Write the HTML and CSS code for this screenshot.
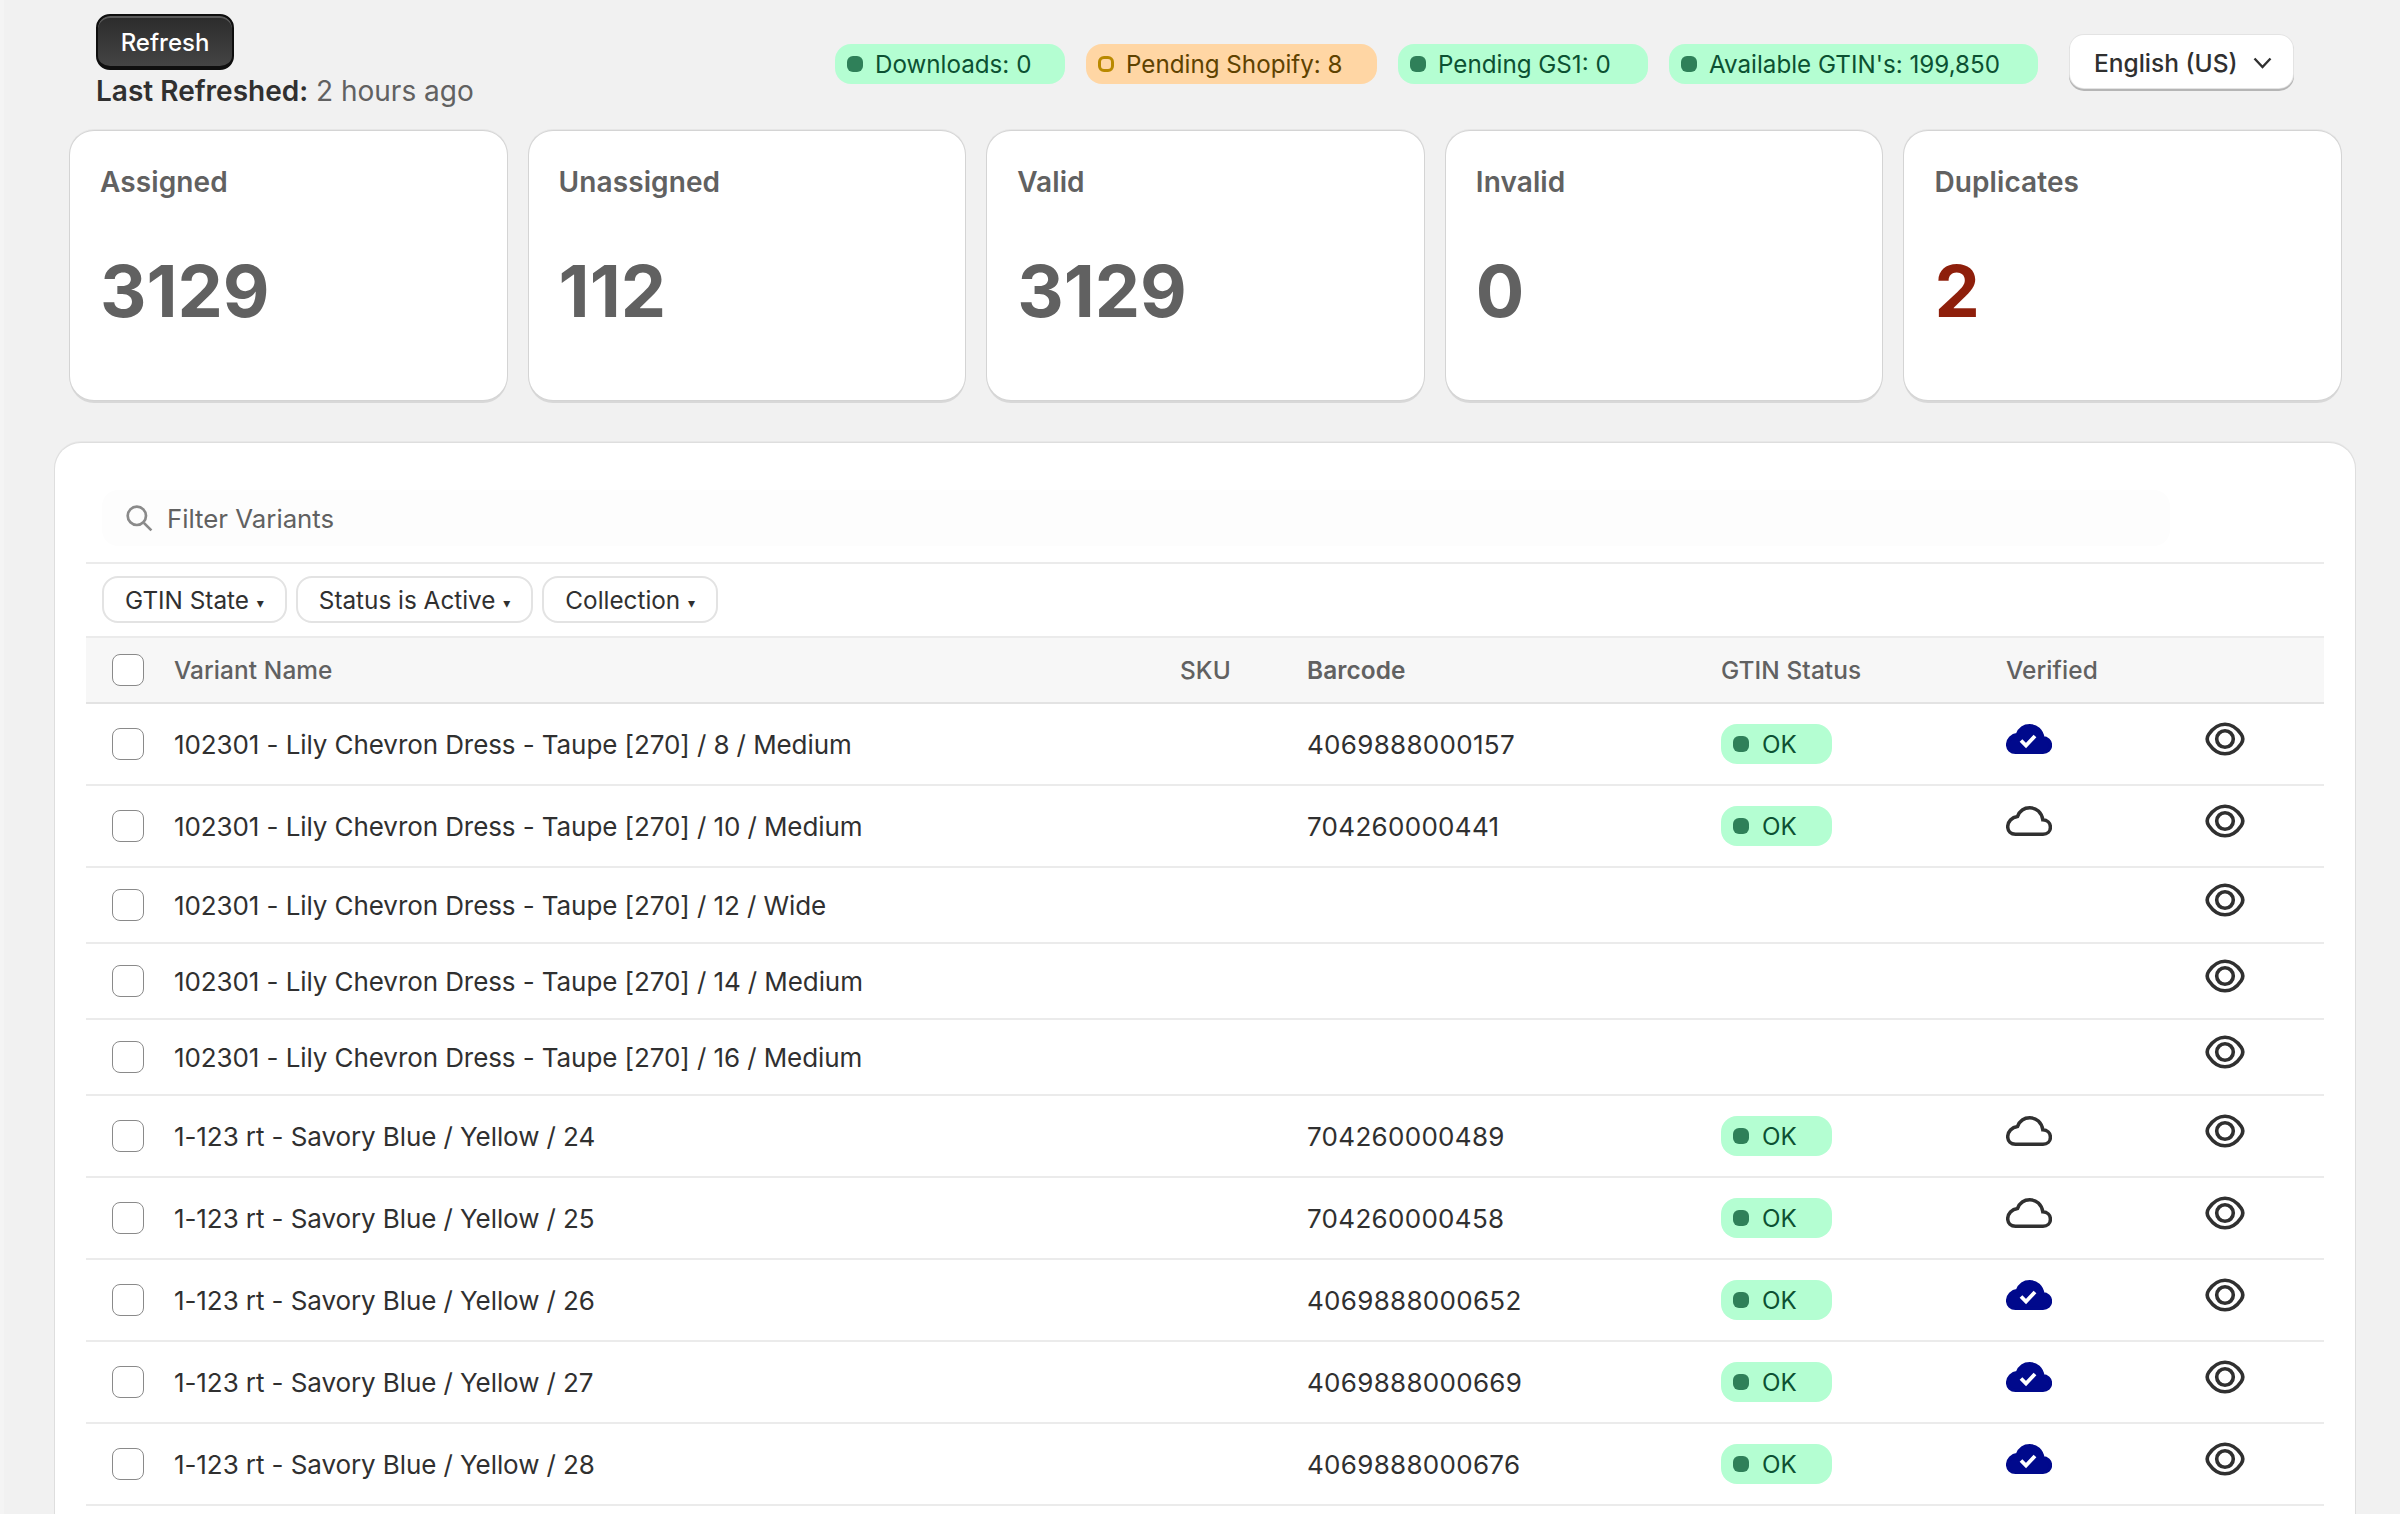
FILE: index.html
```html
<!DOCTYPE html>
<html lang="en">
<head>
<meta charset="utf-8">
<title>GTIN Variants</title>
<link rel="stylesheet" href="styles.css">
</head>
<body>
<svg class="defs" width="0" height="0" aria-hidden="true">
  <defs>
    <path id="cloud-shape" d="M9.500 28.200H37c4.300 0 7.400-3 7.400-7 0-4.200-3.200-7.200-7.600-7.400C35.600 6.500 30.500 1.800 23.800 1.800c-5.600 0-10.200 3.400-12.300 8.700C5.800 11.200 1.700 15.600 1.700 20.800c0 4.300 3.300 7.400 7.800 7.400z"/>
    <g id="eye-shape">
      <path d="M20 2.200c-6.200 0-11.800 3.700-16.200 10-1.900 2.800-1.900 6.700 0 9.500 4.400 6.400 10 10.100 16.200 10.100s11.800-3.700 16.200-10.100c1.900-2.800 1.900-6.700 0-9.500C31.800 5.900 26.200 2.200 20 2.200z"/>
      <circle cx="20" cy="17" r="8.300"/>
    </g>
  </defs>
</svg>
<main class="page">
  <header class="top">
    <div class="refresh-block">
      <button class="refresh">Refresh</button>
      <p class="last"><strong>Last Refreshed:</strong> 2 hours ago</p>
    </div>
    <div class="status-group">
      <span class="badge"><i class="dot"></i>Downloads: 0</span>
      <span class="badge badge-d"><i class="dot dot-ring"></i>Pending Shopify: 8</span>
      <span class="badge badge-g"><i class="dot"></i>Pending GS1: 0</span>
      <span class="badge badge-a"><i class="dot"></i>Available GTIN's: 199,850</span>
      <button class="lang">English (US)
        <svg class="chev" viewBox="0 0 19 12"><path d="M1.500 1.500 9.500 10l8-8.500"/></svg>
      </button>
    </div>
  </header>

  <section class="cards">
    <article class="card"><h2>Assigned</h2><p class="num">3129</p></article>
    <article class="card"><h2>Unassigned</h2><p class="num">112</p></article>
    <article class="card"><h2>Valid</h2><p class="num">3129</p></article>
    <article class="card"><h2>Invalid</h2><p class="num">0</p></article>
    <article class="card"><h2>Duplicates</h2><p class="num num-red">2</p></article>
  </section>

  <section class="panel">
    <div class="search-row">
      <div class="search">
        <svg class="search-icon" viewBox="0 0 26 26"><circle cx="11" cy="11" r="8.500"/><path d="m17.500 17.500 7 7"/></svg>
        <span>Filter Variants</span>
      </div>
    </div>
    <div class="filters">
      <button class="pill">GTIN State <span class="caret">▾</span></button>
      <button class="pill">Status is Active <span class="caret">▾</span></button>
      <button class="pill">Collection <span class="caret">▾</span></button>
    </div>
    <table class="grid">
      <colgroup>
        <col class="c-check"><col class="c-name"><col class="c-sku"><col class="c-bar"><col class="c-gtin"><col class="c-ver"><col class="c-eye">
      </colgroup>
      <thead>
        <tr>
          <th><span class="box"></span></th>
          <th class="th-light">Variant Name</th>
          <th class="th-light">SKU</th>
          <th>Barcode</th>
          <th class="th-light">GTIN Status</th>
          <th class="th-light">Verified</th>
          <th></th>
        </tr>
      </thead>
      <tbody>
        <tr>
          <td><span class="box"></span></td><td>102301 - Lily Chevron Dress - Taupe [270] / 8 / Medium</td><td></td><td class="code">4069888000157</td>
          <td><span class="ok"><i class="dot"></i>OK</span></td>
          <td><svg class="cloud cloud-on" viewBox="0 0 46 30"><use href="#cloud-shape"/><path class="tick" d="m15 16.500 5 5 9-9.500"/></svg></td>
          <td><svg class="eye" viewBox="0 0 40 34"><use href="#eye-shape"/></svg></td>
        </tr>
        <tr>
          <td><span class="box"></span></td><td>102301 - Lily Chevron Dress - Taupe [270] / 10 / Medium</td><td></td><td class="code">704260000441</td>
          <td><span class="ok"><i class="dot"></i>OK</span></td>
          <td><svg class="cloud" viewBox="0 0 46 30"><use href="#cloud-shape"/></svg></td>
          <td><svg class="eye" viewBox="0 0 40 34"><use href="#eye-shape"/></svg></td>
        </tr>
        <tr class="short">
          <td><span class="box"></span></td><td>102301 - Lily Chevron Dress - Taupe [270] / 12 / Wide</td><td></td><td></td><td></td><td></td>
          <td><svg class="eye" viewBox="0 0 40 34"><use href="#eye-shape"/></svg></td>
        </tr>
        <tr class="short">
          <td><span class="box"></span></td><td>102301 - Lily Chevron Dress - Taupe [270] / 14 / Medium</td><td></td><td></td><td></td><td></td>
          <td><svg class="eye" viewBox="0 0 40 34"><use href="#eye-shape"/></svg></td>
        </tr>
        <tr class="short">
          <td><span class="box"></span></td><td>102301 - Lily Chevron Dress - Taupe [270] / 16 / Medium</td><td></td><td></td><td></td><td></td>
          <td><svg class="eye" viewBox="0 0 40 34"><use href="#eye-shape"/></svg></td>
        </tr>
        <tr>
          <td><span class="box"></span></td><td>1-123 rt - Savory Blue / Yellow / 24</td><td></td><td class="code">704260000489</td>
          <td><span class="ok"><i class="dot"></i>OK</span></td>
          <td><svg class="cloud" viewBox="0 0 46 30"><use href="#cloud-shape"/></svg></td>
          <td><svg class="eye" viewBox="0 0 40 34"><use href="#eye-shape"/></svg></td>
        </tr>
        <tr>
          <td><span class="box"></span></td><td>1-123 rt - Savory Blue / Yellow / 25</td><td></td><td class="code">704260000458</td>
          <td><span class="ok"><i class="dot"></i>OK</span></td>
          <td><svg class="cloud" viewBox="0 0 46 30"><use href="#cloud-shape"/></svg></td>
          <td><svg class="eye" viewBox="0 0 40 34"><use href="#eye-shape"/></svg></td>
        </tr>
        <tr>
          <td><span class="box"></span></td><td>1-123 rt - Savory Blue / Yellow / 26</td><td></td><td class="code">4069888000652</td>
          <td><span class="ok"><i class="dot"></i>OK</span></td>
          <td><svg class="cloud cloud-on" viewBox="0 0 46 30"><use href="#cloud-shape"/><path class="tick" d="m15 16.500 5 5 9-9.500"/></svg></td>
          <td><svg class="eye" viewBox="0 0 40 34"><use href="#eye-shape"/></svg></td>
        </tr>
        <tr>
          <td><span class="box"></span></td><td>1-123 rt - Savory Blue / Yellow / 27</td><td></td><td class="code">4069888000669</td>
          <td><span class="ok"><i class="dot"></i>OK</span></td>
          <td><svg class="cloud cloud-on" viewBox="0 0 46 30"><use href="#cloud-shape"/><path class="tick" d="m15 16.500 5 5 9-9.500"/></svg></td>
          <td><svg class="eye" viewBox="0 0 40 34"><use href="#eye-shape"/></svg></td>
        </tr>
        <tr>
          <td><span class="box"></span></td><td>1-123 rt - Savory Blue / Yellow / 28</td><td></td><td class="code">4069888000676</td>
          <td><span class="ok"><i class="dot"></i>OK</span></td>
          <td><svg class="cloud cloud-on" viewBox="0 0 46 30"><use href="#cloud-shape"/><path class="tick" d="m15 16.500 5 5 9-9.500"/></svg></td>
          <td><svg class="eye" viewBox="0 0 40 34"><use href="#eye-shape"/></svg></td>
        </tr>
      </tbody>
    </table>
  </section>
</main>
</body>
</html>
```

FILE: styles.css
```css
* { box-sizing: border-box; }
html, body { margin: 0; height: 1514px; overflow: hidden; }
body {
  background: #f1f1f1;
  font-family: Inter, "Liberation Sans", sans-serif;
  color: #303030;
  border-left: 4px solid #f4f4f4;
}
.defs { position: absolute; }
button { font-family: inherit; }
.top { display: flex; align-items: flex-start; height: 131px; padding: 14px 107px 0 92px; }
.refresh {
  display: block; width: 138px; height: 56px; border-radius: 14px;
  border: 2px solid #0f0f0f; border-bottom-width: 4px;
  background: linear-gradient(#2b2b2b, #444);
  box-shadow: inset 0 2px 0 #5a5a5a;
  color: #fff; font-size: 24px; font-weight: 500; padding: 2px 0 0;
}
.last { margin: 3px 0 0; font-size: 28px; line-height: 36px; color: #616161; }
.last strong { color: #303030; font-weight: 600; }
.status-group { margin-left: auto; display: flex; align-items: flex-start; gap: 21px; padding-top: 21px; }
.badge {
  display: flex; align-items: center; margin-top: 9px; height: 40px; border-radius: 16px;
  background: #b4fed2; color: #0c5132; font-size: 24.200px; padding-left: 12px; width: 230px;
}
.badge-d { width: 291px; background: #ffd6a4; color: #5e4200; }
.badge-g { width: 250px; }
.badge-a { width: 369px; }
.badge .dot { margin-right: 12px; }
.dot { display: inline-block; flex: none; width: 16px; height: 16px; border-radius: 6px; background: #2f8059; }
.dot-ring { background: transparent; border: 3px solid #b98900; }
.lang {
  display: flex; align-items: center; justify-content: space-between;
  width: 223px; height: 53px; margin-left: 11px; padding: 2px 21px 0 24px;
  background: #fff; border: 0; border-radius: 14px; color: #303030; font-size: 24.500px; font-weight: 450;
  box-shadow: 0 0 0 1px #e3e3e3, 0 2px 0 1px #b5b5b5;
}
.chev { width: 19px; height: 12px; fill: none; stroke: #303030; stroke-width: 2.400; }
.cards { display: grid; grid-template-columns: repeat(5, 1fr); gap: 22px; width: 2271px; margin-left: 66px; }
.card {
  height: 269px; padding: 32px 30px 0; background: #fff; border-radius: 24px;
  box-shadow: 0 0 0 1px #d4d4d4, 0 -1px 0 1px #e6e6e6, 0 3px 0 0 #d8d8d8;
}
.card h2 { margin: 0; font-size: 28px; line-height: 38px; font-weight: 600; color: #616161; letter-spacing: .1px; }
.num { margin: 46px 0 0; font-size: 72px; line-height: 88px; font-weight: 700; color: #616161; }
.num-red { color: #8e1f0b; }
.panel {
  width: 2300px; margin: 43px 0 0 51px; padding: 47px 31px 60px; background: #fff;
  border-radius: 26px 26px 0 0; box-shadow: 0 0 0 1px #dedede, 0 -1px 0 1px #e8e8e8;
}
.search-row { padding: 0 0 16px 16px; border-bottom: 2px solid #ebebeb; }
.search {
  display: flex; align-items: center; width: 2068px; height: 56px; padding-left: 23px; gap: 14px;
  background: #fdfdfd; border-radius: 16px; font-size: 25.800px; color: #616161;
}
.search-icon { width: 28px; height: 28px; fill: none; stroke: #8a8a8a; stroke-width: 2.500; }
.filters { display: flex; gap: 9px; height: 72px; padding: 12px 0 0 16px; }
.pill {
  height: 47px; padding: 0 21px; background: #fff; border: 2px solid #e3e3e3; border-radius: 16px;
  color: #303030; font-size: 24.300px; font-weight: 400;
}
.caret { font-family: "DejaVu Sans", sans-serif; font-size: 14px; margin-left: 1px; vertical-align: 1px; }
.grid { width: 2238px; table-layout: fixed; border-collapse: collapse; font-size: 26px; letter-spacing: -.085px; }
.c-check { width: 88px; } .c-name { width: 1006px; } .c-sku { width: 127px; }
.c-bar { width: 414px; } .c-gtin { width: 285px; } .c-ver { width: 200px; } .c-eye { width: 118px; }
th, td { padding: 0; text-align: left; vertical-align: middle; }
thead tr { height: 66px; background: #f7f7f7; border-top: 2px solid #ebebeb; border-bottom: 2px solid #e3e3e3; }
th { font-weight: 600; color: #616161; font-size: 24.400px; letter-spacing: .1px; }
th.th-light { font-weight: 500; }
tbody tr { height: 82px; border-bottom: 2px solid #ebebeb; }
tbody tr.short { height: 76px; }
.code { letter-spacing: .3px; }
.box {
  display: block; width: 32px; height: 32px; margin-left: 26px; background: #fff;
  border: 1.500px solid #8a8a8a; border-radius: 8px;
}
.ok {
  display: flex; align-items: center; width: 111px; height: 40px; padding-left: 12px; gap: 13px;
  background: #b4fed2; border-radius: 16px; color: #0c5132; font-size: 24.200px; letter-spacing: 0;
}
.cloud { display: block; width: 46px; height: 30px; margin-top: -10px; fill: #fff; stroke: #303030; stroke-width: 3.500; }
.cloud-on { fill: #00098c; stroke: #00098c; }
.tick { fill: none; stroke: #fff; stroke-width: 3.800; }
.eye { display: block; width: 40px; height: 34px; margin: -10px 0 0 -1px; fill: none; stroke: #303030; stroke-width: 3.600; }
```
